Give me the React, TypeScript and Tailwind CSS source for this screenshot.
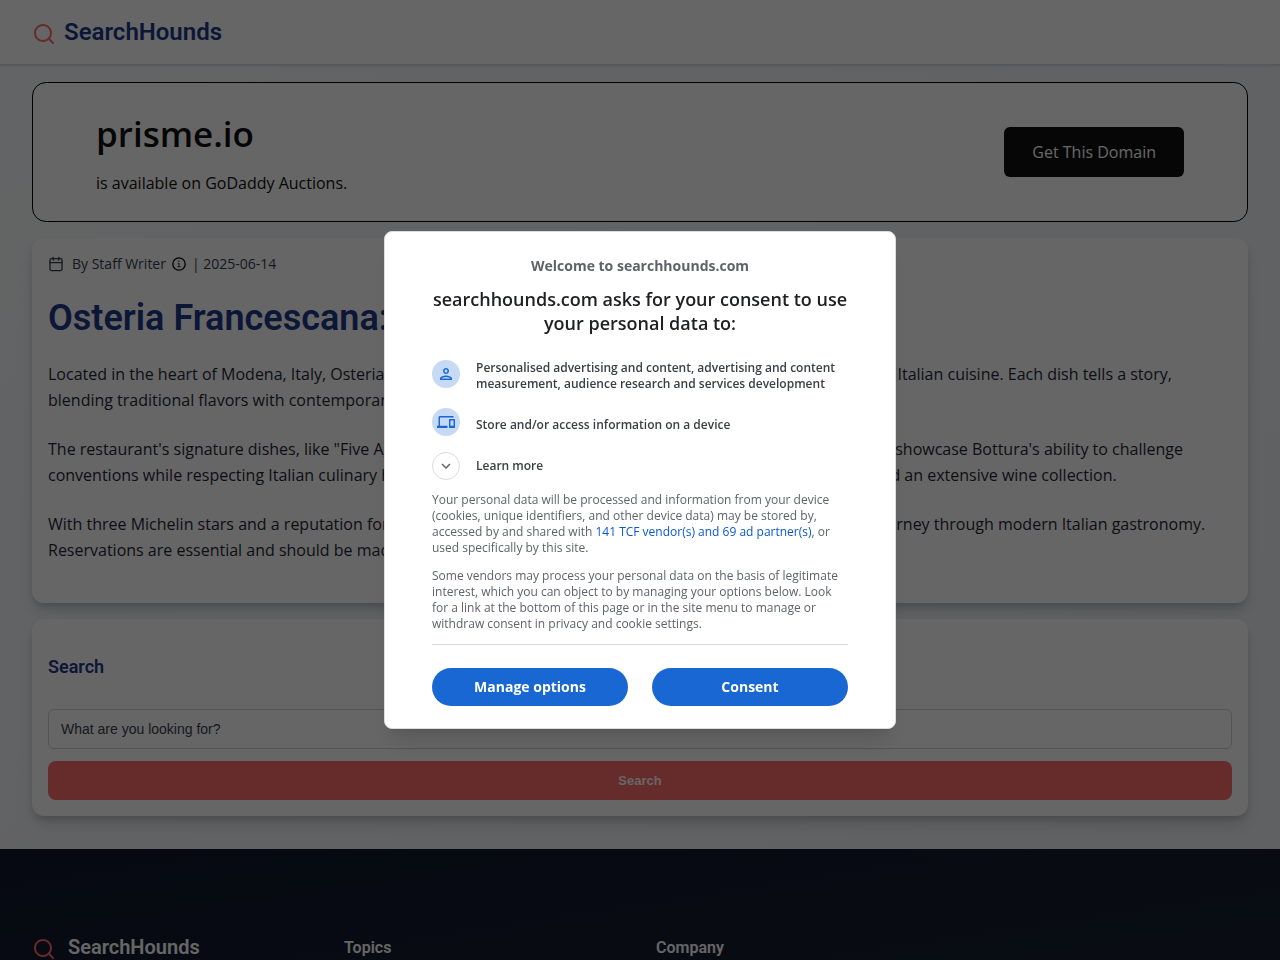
import { useState } from "react";
import { Calendar } from "lucide-react";
import { RiSearchLine } from "react-icons/ri";
import {
  MdExpandMore,
  MdOutlineDevices,
  MdOutlinePerson,
} from "react-icons/md";

const paragraphs = [
  "Located in the heart of Modena, Italy, Osteria Francescana is a dining spot where Chef Massimo Bottura redefines Italian cuisine. Each dish tells a story, blending traditional flavors with contemporary techniques and artistic presentation.",
  "The restaurant's signature dishes, like \"Five Ages of Parmigiano Reggiano\" and \"Oops! I Dropped the Lemon Tart\", showcase Bottura's ability to challenge conventions while respecting Italian culinary heritage. The intimate dining room features contemporary pieces and an extensive wine collection.",
  "With three Michelin stars and a reputation for excellence, Osteria Francescana offers patrons an unforgettable journey through modern Italian gastronomy. Reservations are essential and should be made months in advance.",
];

const cardShadow =
  "shadow-[0_10px_15px_-3px_rgba(0,0,0,0.15),0_4px_6px_-1px_rgba(0,0,0,0.12)]";

function Header() {
  return (
    <header className="flex h-[65px] items-center border-b border-[#d8dce6] bg-white px-8 shadow-sm">
      <a href="#" className="flex items-center gap-2">
        <RiSearchLine className="mt-1 size-6 text-[#ff6b6b]" />
        <span className="font-[Roboto] text-2xl font-semibold text-[#1e3a8a]">
          SearchHounds
        </span>
      </a>
    </header>
  );
}

function DomainBanner() {
  return (
    <section className="flex h-[140px] items-center justify-between rounded-[14px] border border-black bg-white px-[63px] text-[#111111]">
      <div>
        <h2 className="text-[35px] leading-[50px] font-semibold">prisme.io</h2>
        <p className="mt-3 leading-6">is available on GoDaddy Auctions.</p>
      </div>
      <a
        href="#"
        className="rounded-md bg-[#111111] px-7 py-[13px] leading-6 font-medium text-white"
      >
        Get This Domain
      </a>
    </section>
  );
}

function InfoIcon() {
  return (
    <svg
      viewBox="0 0 14 14"
      fill="none"
      stroke="currentColor"
      className="mx-1.5 size-3.5 text-black"
    >
      <circle cx="7" cy="7" r="6.2" strokeWidth="1.3" />
      <path d="M5.8 6.2H7V9.6M5.6 9.7H8.4" strokeWidth="0.8" />
      <circle cx="6.9" cy="4.2" r="0.6" fill="currentColor" stroke="none" />
    </svg>
  );
}

function Article() {
  return (
    <article className={`rounded-xl bg-white px-4 pt-4 pb-10 ${cardShadow}`}>
      <div className="flex items-center text-sm text-[#374151]">
        <Calendar className="mr-2 size-4" />
        <span>By Staff Writer</span>
        <InfoIcon />
        <span>| 2025-06-14</span>
      </div>
      <h1 className="mt-5 font-[Roboto] text-4xl leading-[48px] font-semibold text-[#1e3a8a]">
        Osteria Francescana: A Culinary Gem
      </h1>
      <div className="mt-[19px] space-y-[23px] leading-[26px] text-[#1f2937]">
        {paragraphs.map((text) => (
          <p key={text}>{text}</p>
        ))}
      </div>
    </article>
  );
}

function SearchCard() {
  return (
    <section className={`rounded-xl bg-white px-4 pt-9 pb-4 ${cardShadow}`}>
      <h3 className="font-[Roboto] text-lg leading-6 font-semibold text-[#1e3a8a]">
        Search
      </h3>
      <form
        className="mt-[30px] flex flex-col gap-3 font-['Liberation_Sans',Arial,sans-serif]"
        onSubmit={(e) => e.preventDefault()}
      >
        <input
          type="text"
          aria-label="Search"
          placeholder="What are you looking for?"
          className="h-10 w-full rounded-md border border-[#d1d5db] px-3 text-sm placeholder:text-[#374151]"
        />
        <button
          type="submit"
          className="h-[39px] w-full rounded-lg bg-[#ff6b6b] text-[13px] font-bold text-white"
        >
          Search
        </button>
      </form>
    </section>
  );
}

function Footer() {
  return (
    <footer className="grid grid-cols-4 gap-8 bg-linear-to-br from-[#0f172a] to-[#1a2333] px-8 pt-[84px] pb-20 font-[Roboto] text-white">
      <div className="flex h-7 items-center gap-3">
        <RiSearchLine className="mt-1 size-6 text-[#ff6b6b]" />
        <span className="text-xl font-semibold">SearchHounds</span>
      </div>
      <h4 className="leading-[30px] font-semibold">Topics</h4>
      <h4 className="leading-[30px] font-semibold">Company</h4>
    </footer>
  );
}

function ConsentDialog({ onClose }: { onClose: () => void }) {
  const [open, setOpen] = useState<boolean>(false);
  return (
    <div className="fixed inset-0 z-10 flex items-center justify-center bg-black/60">
      <div
        role="dialog"
        aria-modal="true"
        aria-labelledby="consent-title"
        className="w-full max-w-[512px] rounded-lg border border-[#dadce0] bg-white px-[47px] pt-6 pb-[22px] shadow-xl"
      >
        <p className="text-center text-sm font-bold text-[#5f6368]">
          Welcome to searchhounds.com
        </p>
        <h2
          id="consent-title"
          className="mt-[11px] text-center text-lg leading-6 font-semibold text-[#202124]"
        >
          searchhounds.com asks for your consent to use your personal data to:
        </h2>
        <ul className="mt-[25px] text-xs font-semibold text-[#3c4043]">
          <li className="flex items-start gap-4">
            <span className="flex size-7 shrink-0 items-center justify-center rounded-full bg-[#c6daf5] text-[#1967d2]">
              <MdOutlinePerson className="size-[18px]" />
            </span>
            Personalised advertising and content, advertising and content
            measurement, audience research and services development
          </li>
          <li className="mt-4 flex items-end gap-4">
            <span className="flex size-7 shrink-0 items-center justify-center rounded-full bg-[#c6daf5] text-[#1967d2]">
              <MdOutlineDevices className="size-[18px]" />
            </span>
            <span className="pb-[3px]">
              Store and/or access information on a device
            </span>
          </li>
          <li className="mt-4">
            <button
              type="button"
              aria-expanded={open}
              onClick={() => setOpen(!open)}
              className="flex items-center gap-4"
            >
              <span className="flex size-7 items-center justify-center rounded-full border border-[#dadce0] text-[#5f6368]">
                <MdExpandMore className="size-[18px]" />
              </span>
              Learn more
            </button>
          </li>
        </ul>
        <div className="mt-3 space-y-3 border-b border-[#dadce0] pb-3 text-xs text-[#5f6368]">
          <p>
            Your personal data will be processed and information from your
            device (cookies, unique identifiers, and other device data) may be
            stored by, accessed by and shared with{" "}
            <a href="#" className="font-medium text-[#0b57d0]">
              141 TCF vendor(s) and 69 ad partner(s)
            </a>
            , or used specifically by this site.
          </p>
          <p>
            Some vendors may process your personal data on the basis of
            legitimate interest, which you can object to by managing your
            options below. Look for a link at the bottom of this page or in the
            site menu to manage or withdraw consent in privacy and cookie
            settings.
          </p>
        </div>
        <div className="mt-[23px] grid grid-cols-2 gap-6 text-sm font-bold text-white">
          <button type="button" className="h-[38px] rounded-full bg-[#1967d2]">
            Manage options
          </button>
          <button
            type="button"
            onClick={onClose}
            className="h-[38px] rounded-full bg-[#1967d2]"
          >
            Consent
          </button>
        </div>
      </div>
    </div>
  );
}

function App() {
  const [consent, setConsent] = useState<boolean>(true);
  return (
    <div className="min-h-screen bg-linear-to-br from-[#f8fafc] to-[#eef1f5] font-['Open_Sans',sans-serif]">
      <Header />
      <main className="flex flex-col gap-4 px-8 pt-[17px] pb-[33px]">
        <DomainBanner />
        <Article />
        <SearchCard />
      </main>
      <Footer />
      {consent && <ConsentDialog onClose={() => setConsent(false)} />}
    </div>
  );
}
export default App;
